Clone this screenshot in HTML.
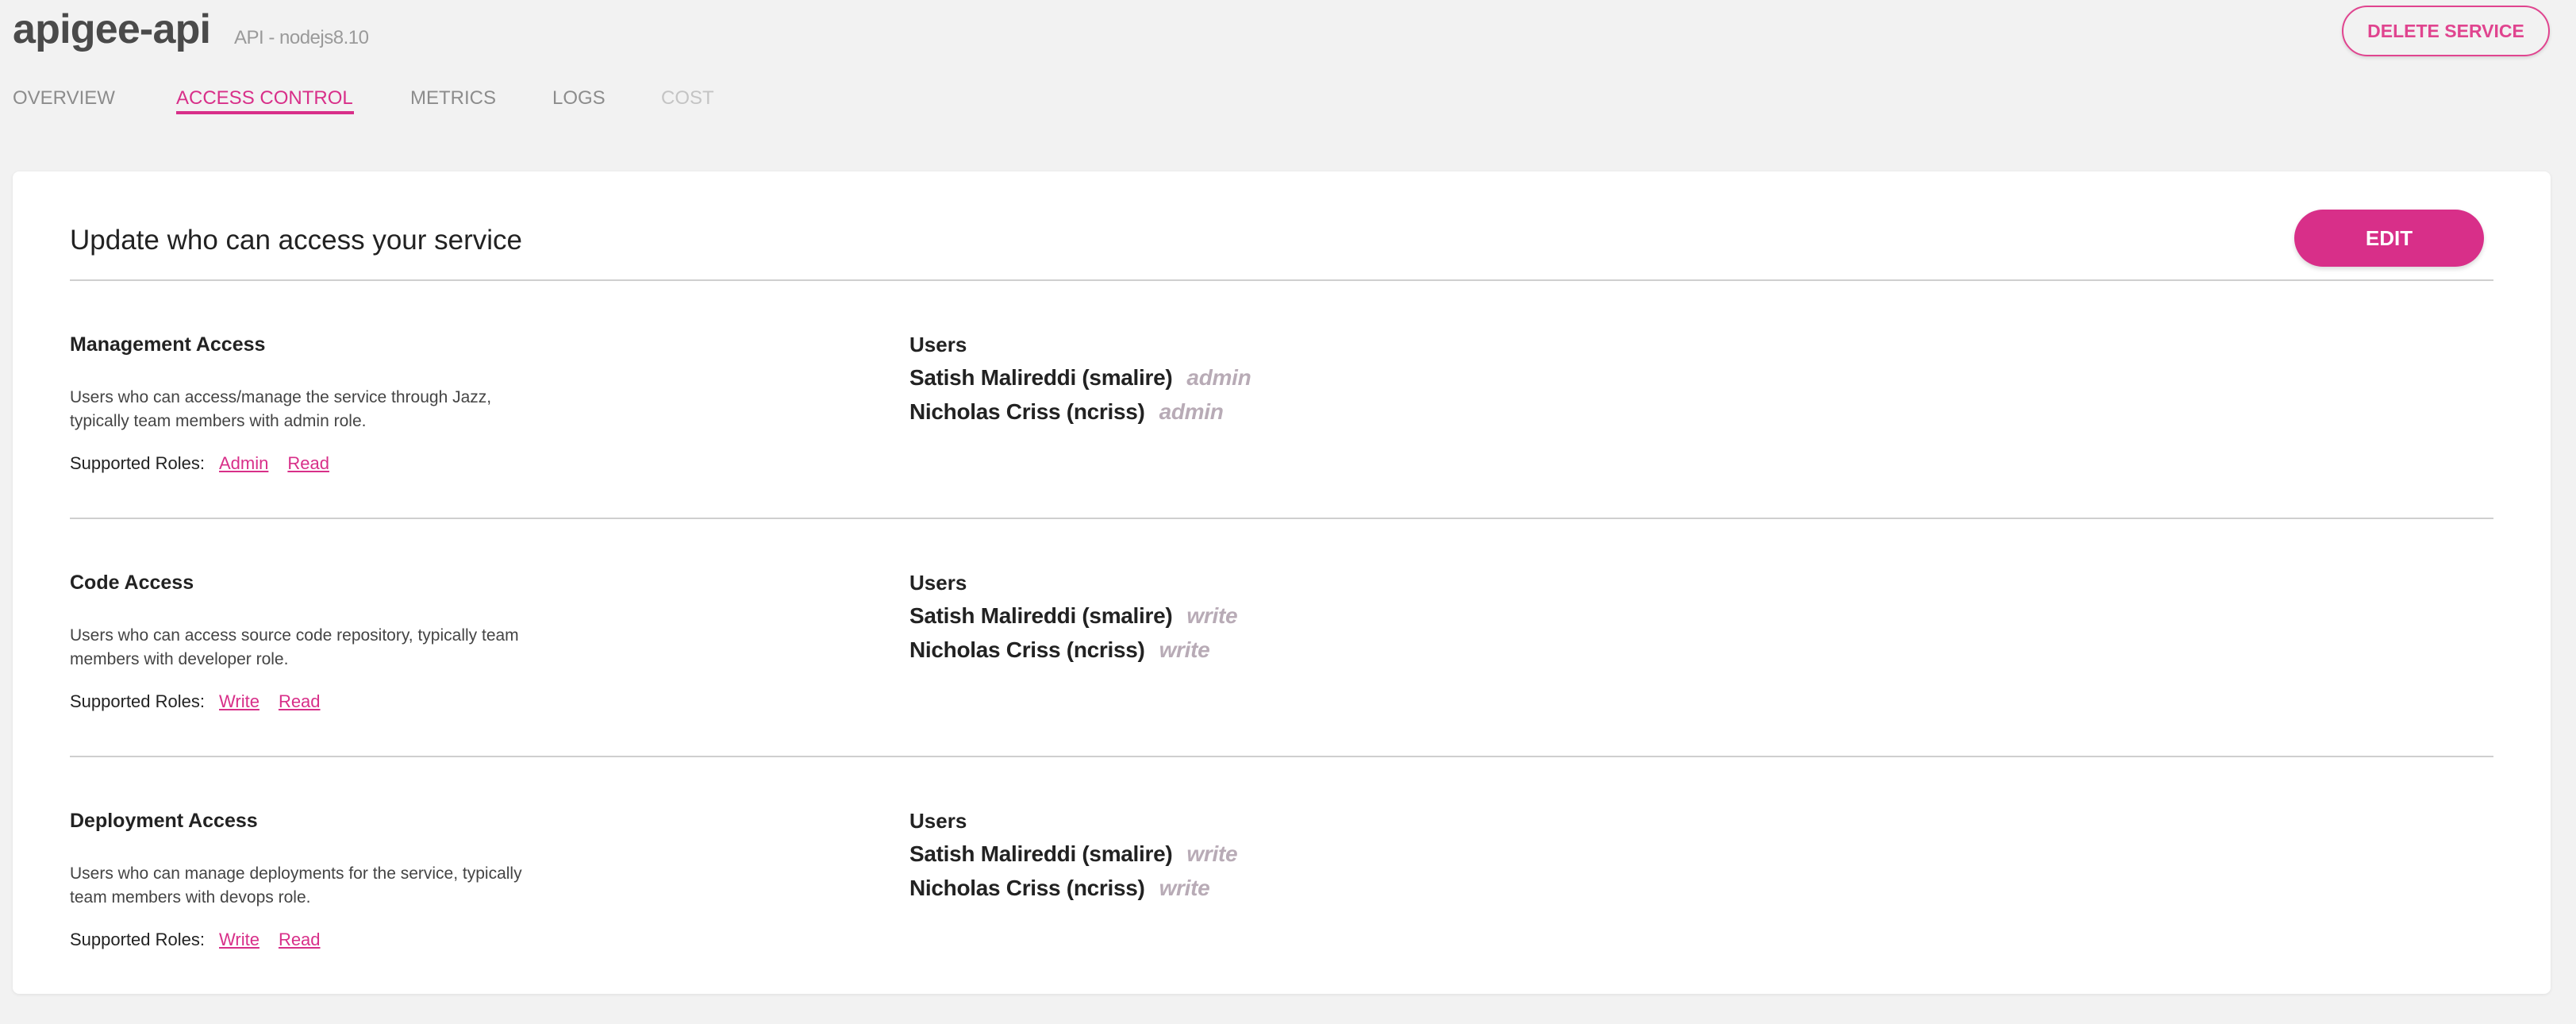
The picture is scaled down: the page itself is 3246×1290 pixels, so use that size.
<!DOCTYPE html>
<html><head><meta charset="utf-8"><style>
*{margin:0;padding:0;box-sizing:border-box}
body{width:3246px;height:1290px;background:#f2f2f2;font-family:"Liberation Sans",Arial,sans-serif;position:relative;overflow:hidden}
.a{position:absolute;white-space:nowrap;line-height:1}
.tab{font-size:24px;color:#8c8c8c;top:112px}
.card{position:absolute;left:16px;top:216px;width:3198px;height:1036px;background:#fff;border-radius:8px;box-shadow:0 1px 4px rgba(0,0,0,.08)}
.sep{position:absolute;left:88px;width:3054px;height:2px;background:#cfcfcf}
.h{font-size:25px;font-weight:bold;color:#222;left:88px}
.d{font-size:21px;color:#444;left:88px;line-height:30px}
.r{font-size:22px;color:#222;left:88px}
.r a{color:#d82f89;text-decoration:underline;margin-left:18px}
.r a+a{margin-left:24px}
.u{font-size:26px;font-weight:bold;color:#222;left:1146px}
.n{font-size:28px;font-weight:bold;color:#222;left:1146px;letter-spacing:-0.3px}
.n i{color:#b8abb6;margin-left:18px}
</style></head><body>
<div class="a" style="left:16px;top:11px;font-size:52px;font-weight:bold;color:#4a4a4a;letter-spacing:-0.8px">apigee-api</div>
<div class="a" style="left:295px;top:36px;font-size:24px;color:#9a9a9a;letter-spacing:-0.5px">API - nodejs8.10</div>
<div class="a tab" style="left:16px">OVERVIEW</div>
<div class="a tab" style="left:222px;color:#d82f89">ACCESS CONTROL</div>
<div class="a" style="left:222px;top:140px;width:224px;height:4px;background:#d82f89"></div>
<div class="a tab" style="left:517px">METRICS</div>
<div class="a tab" style="left:696px">LOGS</div>
<div class="a tab" style="left:833px;color:#c4c4c4">COST</div>
<div class="a" style="left:2951px;top:7px;width:262px;height:64px;border:2px solid #e0448f;border-radius:32px;color:#e0448f;font-size:23px;font-weight:bold;display:flex;align-items:center;justify-content:center;box-shadow:0 2px 4px rgba(0,0,0,.12)">DELETE SERVICE</div>
<div class="card"></div>
<div class="a" style="left:88px;top:285px;font-size:35px;color:#222">Update who can access your service</div>
<div class="a" style="left:2891px;top:264px;width:239px;height:72px;border-radius:36px;background:#d82f89;color:#fff;font-size:26px;font-weight:bold;display:flex;align-items:center;justify-content:center;box-shadow:0 3px 6px rgba(0,0,0,.15)">EDIT</div>
<div class="sep" style="top:352px"></div>

<div class="a h" style="top:422px">Management Access</div>
<div class="a d" style="top:486px">Users who can access/manage the service through Jazz,<br>typically team members with admin role.</div>
<div class="a r" style="top:573px">Supported Roles:<a>Admin</a><a>Read</a></div>
<div class="a u" style="top:421px">Users</div>
<div class="a n" style="top:462px">Satish Malireddi (smalire)<i>admin</i></div>
<div class="a n" style="top:505px">Nicholas Criss (ncriss)<i>admin</i></div>
<div class="sep" style="top:652px"></div>

<div class="a h" style="top:722px">Code Access</div>
<div class="a d" style="top:786px">Users who can access source code repository, typically team<br>members with developer role.</div>
<div class="a r" style="top:873px">Supported Roles:<a>Write</a><a>Read</a></div>
<div class="a u" style="top:721px">Users</div>
<div class="a n" style="top:762px">Satish Malireddi (smalire)<i>write</i></div>
<div class="a n" style="top:805px">Nicholas Criss (ncriss)<i>write</i></div>
<div class="sep" style="top:952px"></div>

<div class="a h" style="top:1022px">Deployment Access</div>
<div class="a d" style="top:1086px">Users who can manage deployments for the service, typically<br>team members with devops role.</div>
<div class="a r" style="top:1173px">Supported Roles:<a>Write</a><a>Read</a></div>
<div class="a u" style="top:1021px">Users</div>
<div class="a n" style="top:1062px">Satish Malireddi (smalire)<i>write</i></div>
<div class="a n" style="top:1105px">Nicholas Criss (ncriss)<i>write</i></div>
</body></html>
